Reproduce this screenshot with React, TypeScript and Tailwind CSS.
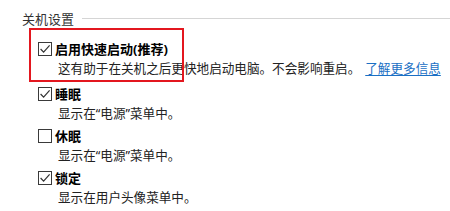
import React from 'react';

interface Option {
  label: string;
  desc: string;
  checked: boolean;
  link?: string;
}

const options: Option[] = [
  { label: '启用快速启动(推荐)', desc: '这有助于在关机之后更快地启动电脑。不会影响重启。', checked: true, link: '了解更多信息' },
  { label: '睡眠', desc: '显示在“电源”菜单中。', checked: true },
  { label: '休眠', desc: '显示在“电源”菜单中。', checked: false },
  { label: '锁定', desc: '显示在用户头像菜单中。', checked: true },
];

const Checkbox: React.FC<{ checked: boolean }> = ({ checked }) => (
  <div className="w-[14px] h-[14px] border border-[#3a3a3a] bg-white flex items-center justify-center shrink-0">
    {checked && (
      <svg width="12" height="12" viewBox="0 0 12 12" fill="none">
        <path d="M1.6 6 L4.6 9.2 L10.6 2.4" stroke="#333333" strokeWidth="1.2" />
      </svg>
    )}
  </div>
);

const App: React.FC = () => {
  return (
    <div
      className="relative w-[450px] h-[211px] bg-white overflow-hidden"
      style={{ fontFamily: '"Noto Sans", "Noto Sans CJK SC", sans-serif' }}
    >
      <div className="flex items-center h-[20px] mt-[9px] pl-[22px]">
        <span className="text-[13px] text-[#333333] leading-[20px]">关机设置</span>
        <div className="flex-1 h-px bg-[#d5d5d5] ml-[8px] -mt-[2px]" />
      </div>

      <div className="flex flex-col mt-[10px] pl-[38px]">
        {options.map((o, i) => (
          <div key={i} className={i === 0 ? 'mb-[6px]' : 'mb-[3px]'}>
            <div className="flex items-center h-[20px] gap-[3px]">
              <Checkbox checked={o.checked} />
              <span className="text-[13px] font-bold text-black leading-[20px]">{o.label}</span>
            </div>
            <div className="h-[19px] pl-[20px] text-[12.6px] leading-[19px] text-[#222222] whitespace-nowrap">
              {o.desc}
              {o.link && (
                <a href="#" className="ml-[5px] text-[#1a6fc4] underline underline-offset-2">
                  {o.link}
                </a>
              )}
            </div>
          </div>
        ))}
      </div>

      {/* red annotation box */}
      <div className="absolute left-[29px] top-[28px] w-[155px] h-[54px] border-2 border-[#e3171f]" />
    </div>
  );
};

export default App;
